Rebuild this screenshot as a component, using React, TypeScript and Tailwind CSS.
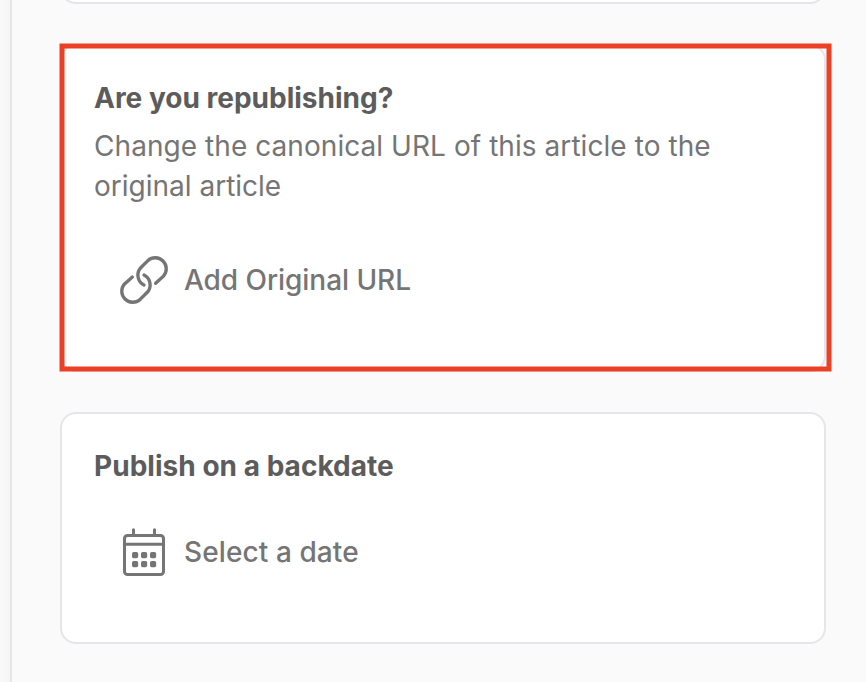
import type { ReactNode } from 'react';

function LinkIcon() {
  return (
    <svg className="size-[70px] shrink-0" viewBox="0 0 210 210" fill="none" stroke="#757575" strokeWidth="10" strokeLinecap="round" strokeLinejoin="round">
      <path d="M137 115 L160.3 93.3 A33 33 0 0 0 113.7 46.7 L93.7 66.7 A33 33 0 0 0 102 120" />
      <path d="M67 96 L43.7 116.7 A33 33 0 0 0 90.3 163.3 L110.3 143.3 A33 33 0 0 0 102 90" />
    </svg>
  );
}

function CalendarIcon() {
  return (
    <svg className="size-[70px] shrink-0" viewBox="0 0 210 210" fill="none" stroke="#757575" strokeWidth="9" strokeLinecap="round">
      <rect x="43.5" y="52.5" width="117" height="117" rx="9" />
      <path d="M43 79H161M70.5 35V52M133.5 35V52" />
      <g fill="#757575" stroke="none">
        {[66, 93, 120].map((x) =>
          [102, 129].map((y) => <rect key={`${x}-${y}`} x={x} y={y} width="18.5" height="18.5" rx="5" />),
        )}
      </g>
    </svg>
  );
}

function Card({ className, children }: { className: string; children?: ReactNode }) {
  return <section className={`w-[766px] shrink-0 rounded-2xl border-2 border-[#e5e5ea] bg-white px-8 ${className}`}>{children}</section>;
}

function Action({ icon, label, className, labelClass }: { icon: ReactNode; label: string; className: string; labelClass: string }) {
  return (
    <button className={`ml-4 flex h-[70px] items-center gap-1 font-medium text-[#757575] ${className}`}>
      {icon}
      <span className={`whitespace-nowrap ${labelClass}`}>{label}</span>
    </button>
  );
}

export default function App() {
  return (
    <main className="flex h-[682px] w-[866px] overflow-hidden bg-[#fafafa] font-['Inter',sans-serif] text-[28px] leading-10">
      <div className="w-3 shrink-0 border-r-2 border-[#e5e5ea] bg-linear-to-r from-[#fafafa] to-[#f5f5f5]" />
      <div className="flex flex-col gap-10 pl-12">
        <Card className="-mt-[60px] h-16" />
        <div className="relative">
          <Card className="h-[328px] pt-8">
            <h2 className="font-bold text-[#5c5c5c]"><span className="whitespace-nowrap">Are you republishing?</span></h2>
            <p className="mt-2 text-[#757575]">
              <span className="whitespace-nowrap tracking-[0.06px]">Change the canonical URL of this article to the</span>
              <br />
              <span>original article</span>
            </p>
            <Action icon={<LinkIcon />} label="Add Original URL" className="mt-[39px]" labelClass="tracking-[-0.05px]" />
          </Card>
          <svg className="pointer-events-none absolute -top-px -left-px h-[329px] w-[773px]" viewBox="0 0 773 329" fill="none">
            <rect x="3" y="3" width="767" height="323" stroke="#ec4024" strokeWidth="5" />
          </svg>
        </div>
        <Card className="h-[232px] pt-8">
          <h2 className="font-bold text-[#5c5c5c]"><span className="tracking-[0.03px]">Publish on a backdate</span></h2>
          <Action icon={<CalendarIcon />} label="Select a date" className="mt-8" labelClass="-mt-0.5 tracking-[0.1px]" />
        </Card>
      </div>
    </main>
  );
}
